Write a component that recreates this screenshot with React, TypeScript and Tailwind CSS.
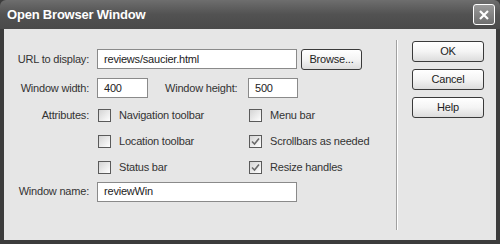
import React from "react";

const font = { fontFamily: '"Liberation Sans", Arial, sans-serif' };

const Check = ({ checked }: { checked?: boolean }) => (
  <div className="w-[13px] h-[13px] border border-[#5a5a5a] bg-gradient-to-br from-[#d4d4d4] to-white flex items-center justify-center shrink-0">
    {checked && (
      <svg width="9" height="9" viewBox="0 0 9 9">
        <path d="M1 4.5 L3.5 7 L8 1.5" stroke="#6a6a6a" strokeWidth="1.6" fill="none" />
      </svg>
    )}
  </div>
);

const Btn = ({ label, w }: { label: string; w: string }) => (
  <div
    className={`${w} h-[21px] shrink-0 rounded-[3px] border border-[#3a3a3a] bg-gradient-to-b from-white via-[#f4f4f4] to-[#dcdcdc] flex items-center justify-center text-[11px] text-[#222]`}
  >
    {label}
  </div>
);

const Field = ({ value, w }: { value: string; w: string }) => (
  <div className={`${w} h-[20px] shrink-0 border border-[#8a8a8a] bg-white flex items-center pl-[6px] text-[11px] text-[#222]`}>
    {value}
  </div>
);

const Label = ({ text }: { text: string }) => (
  <div className="w-[85px] text-right text-[11px] text-[#333] shrink-0">{text}</div>
);

const Attr = ({ label, checked, w }: { label: string; checked?: boolean; w?: string }) => (
  <div className={`flex items-center gap-[8px] shrink-0 ${w ?? ""}`}>
    <Check checked={checked} />
    <span className="text-[11px] text-[#333] whitespace-nowrap">{label}</span>
  </div>
);

export default function App() {
  return (
    <div style={font} className="w-[500px] h-[244px] bg-[#3c3c3c] flex flex-col overflow-hidden tracking-[-0.2px]">
      <div className="h-[29px] rounded-t-[6px] bg-gradient-to-b from-[#6e6e6e] via-[#525252] to-[#4a4a4a] flex items-center justify-between pl-[7px] pr-[5px] shrink-0">
        <span className="text-white text-[13px] font-bold tracking-[-0.2px]">Open Browser Window</span>
        <div className="w-[22px] h-[21px] rounded-[3px] border border-white bg-gradient-to-b from-[#9a9a9a] to-[#6e6e6e] flex items-center justify-center">
          <svg width="12" height="12" viewBox="0 0 12 12">
            <path d="M2 2 L10 10 M10 2 L2 10" stroke="white" strokeWidth="2.2" />
          </svg>
        </div>
      </div>
      <div className="flex-1 mx-[4px] mb-[4px] bg-[#e6e6e6] flex">
        <div className="w-[392px] shrink-0 pt-[20px] flex flex-col">
          <div className="flex items-center h-[20px]">
            <Label text="URL to display:" />
            <div className="ml-[8px]">
              <Field value="reviews/saucier.html" w="w-[200px]" />
            </div>
            <div className="ml-[4px]">
              <Btn label="Browse..." w="w-[61px]" />
            </div>
          </div>
          <div className="flex items-center h-[20px] mt-[9px]">
            <Label text="Window width:" />
            <div className="ml-[8px]">
              <Field value="400" w="w-[51px]" />
            </div>
            <div className="ml-[17px] text-[11px] text-[#333] w-[83px] shrink-0">Window height:</div>
            <Field value="500" w="w-[50px]" />
          </div>
          <div className="flex items-center h-[26px] mt-[4px]">
            <Label text="Attributes:" />
            <div className="ml-[9px] flex">
              <Attr label="Navigation toolbar" w="w-[151px]" />
              <Attr label="Menu bar" />
            </div>
          </div>
          <div className="flex items-center h-[26px]">
            <div className="w-[85px] shrink-0" />
            <div className="ml-[9px] flex">
              <Attr label="Location toolbar" w="w-[151px]" />
              <Attr label="Scrollbars as needed" checked />
            </div>
          </div>
          <div className="flex items-center h-[26px]">
            <div className="w-[85px] shrink-0" />
            <div className="ml-[9px] flex">
              <Attr label="Status bar" w="w-[151px]" />
              <Attr label="Resize handles" checked />
            </div>
          </div>
          <div className="flex items-center h-[19px] mt-[2px]">
            <Label text="Window name:" />
            <div className="ml-[8px]">
              <Field value="reviewWin" w="w-[200px]" />
            </div>
          </div>
        </div>
        <div className="mt-[11px] h-[190px] w-[2px] shrink-0 border-l border-[#a0a0a0] border-r border-r-white" />
        <div className="ml-[14px] pt-[12px] flex flex-col gap-[7px]">
          <Btn label="OK" w="w-[72px]" />
          <Btn label="Cancel" w="w-[72px]" />
          <Btn label="Help" w="w-[72px]" />
        </div>
      </div>
    </div>
  );
}
